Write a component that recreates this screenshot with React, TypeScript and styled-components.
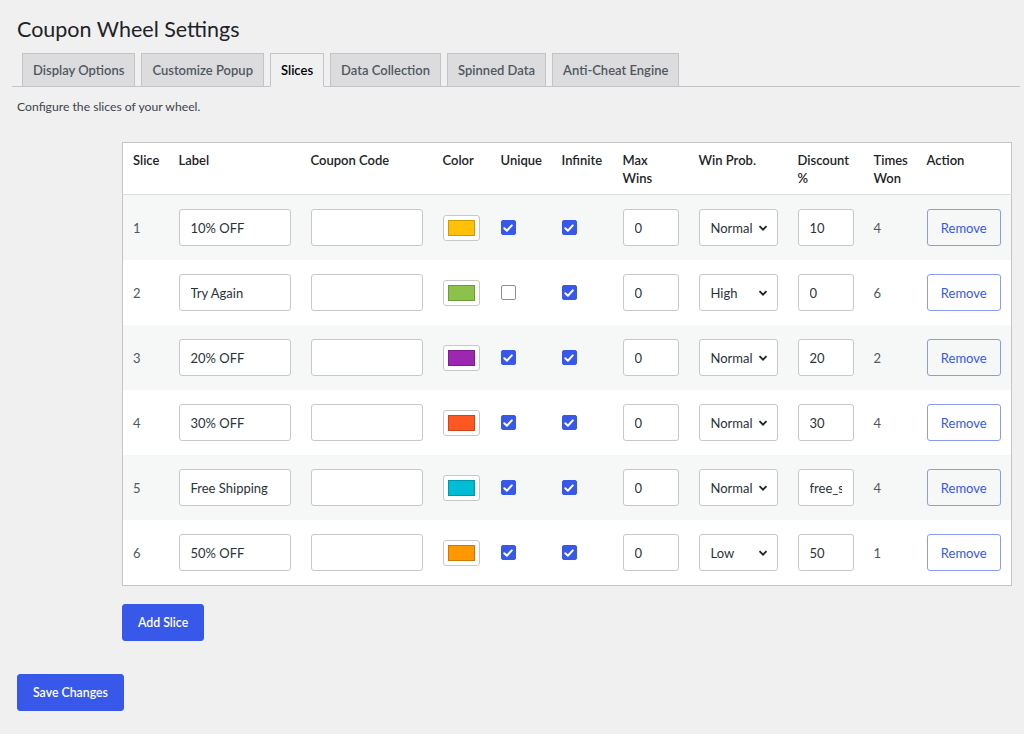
import styled, { createGlobalStyle } from 'styled-components';

type Slice = {
  label: string;
  color: string;
  unique: boolean;
  infinite: boolean;
  prob: string;
  discount: string;
  won: number;
};

const slices: Slice[] = [
  { label: '10% OFF', color: '#ffc107', unique: true, infinite: true, prob: 'Normal', discount: '10', won: 4 },
  { label: 'Try Again', color: '#8bc34a', unique: false, infinite: true, prob: 'High', discount: '0', won: 6 },
  { label: '20% OFF', color: '#9c27b0', unique: true, infinite: true, prob: 'Normal', discount: '20', won: 2 },
  { label: '30% OFF', color: '#ff5722', unique: true, infinite: true, prob: 'Normal', discount: '30', won: 4 },
  { label: 'Free Shipping', color: '#00bcd4', unique: true, infinite: true, prob: 'Normal', discount: 'free_s', won: 4 },
  { label: '50% OFF', color: '#ff9800', unique: true, infinite: true, prob: 'Low', discount: '50', won: 1 },
];

const tabs = ['Display Options', 'Customize Popup', 'Slices', 'Data Collection', 'Spinned Data', 'Anti-Cheat Engine'];

const columns = [
  { title: 'Slice', width: 46 },
  { title: 'Label', width: 132 },
  { title: 'Coupon Code', width: 132 },
  { title: 'Color', width: 58 },
  { title: 'Unique', width: 61 },
  { title: 'Infinite', width: 61 },
  { title: 'Max Wins', width: 76 },
  { title: 'Win Prob.', width: 99 },
  { title: 'Discount %', width: 76 },
  { title: 'Times Won', width: 53 },
  { title: 'Action', width: 95 },
];

function Check({ checked }: { checked: boolean }) {
  return (
    <CheckBox $checked={checked}>
      {checked && (
        <svg width="12" height="12" viewBox="0 0 12 12">
          <path d="M2.3 6.2 L4.9 8.7 L9.8 3.4" fill="none" stroke="#fff" strokeWidth="2" strokeLinecap="round" strokeLinejoin="round" />
        </svg>
      )}
    </CheckBox>
  );
}

function Select({ value }: { value: string }) {
  return (
    <SelectWrap>
      <SelectBox defaultValue={value}>
        <option>Low</option>
        <option>Normal</option>
        <option>High</option>
      </SelectBox>
      <Chevron width="10" height="10" viewBox="0 0 10 10">
        <path d="M1.5 3.2 L5 6.7 L8.5 3.2" fill="none" stroke="#1d2327" strokeWidth="1.8" />
      </Chevron>
    </SelectWrap>
  );
}

export default function App() {
  return (
    <Page>
      <GlobalStyle />
      <Title>Coupon Wheel Settings</Title>
      <TabBar>
        {tabs.map((t) => (
          <Tab key={t} $active={t === 'Slices'}>
            {t}
          </Tab>
        ))}
      </TabBar>
      <Description>Configure the slices of your wheel.</Description>

      <TableArea>
        <Table>
          <colgroup>
            {columns.map((c) => (
              <col key={c.title} style={{ width: c.width }} />
            ))}
          </colgroup>
          <thead>
            <tr>
              {columns.map((c) => (
                <Th key={c.title}>{c.title}</Th>
              ))}
            </tr>
          </thead>
          <tbody>
            {slices.map((s, i) => (
              <Row key={i} $striped={i % 2 === 0}>
                <Td>
                  <Muted>{i + 1}</Muted>
                </Td>
                <Td>
                  <TextInput defaultValue={s.label} />
                </Td>
                <Td>
                  <TextInput defaultValue="" />
                </Td>
                <Td>
                  <Swatch>
                    <SwatchFill $color={s.color} />
                  </Swatch>
                </Td>
                <Td>
                  <Check checked={s.unique} />
                </Td>
                <Td>
                  <Check checked={s.infinite} />
                </Td>
                <Td>
                  <TextInput defaultValue="0" />
                </Td>
                <Td>
                  <Select value={s.prob} />
                </Td>
                <Td>
                  <TextInput defaultValue={s.discount} />
                </Td>
                <Td>
                  <Muted>{s.won}</Muted>
                </Td>
                <Td>
                  <OutlineButton>Remove</OutlineButton>
                </Td>
              </Row>
            ))}
          </tbody>
        </Table>
        <PrimaryButton>Add Slice</PrimaryButton>
      </TableArea>

      <PrimaryButton>Save Changes</PrimaryButton>
    </Page>
  );
}

const GlobalStyle = createGlobalStyle`
  html, body {
    margin: 0;
    background: #f0f0f1;
  }
  body {
    font-family: Lato, "Noto Sans", sans-serif;
    font-size: 13px;
    color: #3c434a;
  }
  * {
    box-sizing: border-box;
  }
`;

const Page = styled.div`
  padding: 12px 4px 22px 17px;
  min-height: 734px;
`;

const Title = styled.h1`
  margin: 0;
  padding: 3px 0 0;
  font-size: 21.5px;
  font-weight: 400;
  line-height: 28px;
  color: #1d2327;
`;

const TabBar = styled.div`
  display: flex;
  align-items: flex-end;
  gap: 6px;
  margin: 10px 0 0 -5px;
  padding-left: 10px;
  border-bottom: 1px solid #c3c4c7;
`;

const Tab = styled.div<{ $active: boolean }>`
  padding: 6px 10px;
  margin-bottom: -1px;
  font-size: 13px;
  font-weight: 600;
  line-height: 20px;
  color: ${(p) => (p.$active ? '#000' : '#50575e')};
  background: ${(p) => (p.$active ? '#f0f0f1' : '#dcdcde')};
  border: 1px solid #c3c4c7;
  border-bottom-color: ${(p) => (p.$active ? '#f0f0f1' : '#c3c4c7')};
`;

const Description = styled.p`
  margin: 11px 0 0;
  font-size: 12.2px;
  line-height: 18px;
  color: #3c434a;
`;

const TableArea = styled.div`
  display: flex;
  flex-direction: column;
  align-items: flex-start;
  gap: 18px;
  margin: 26px 0 33px 105px;
`;

const Table = styled.table`
  width: 889px;
  table-layout: fixed;
  border-collapse: collapse;
  background: #fff;
  border: 1px solid #c3c4c7;
`;

const Th = styled.th`
  padding: 8px 10px 7px;
  text-align: left;
  vertical-align: top;
  font-size: 13px;
  font-weight: 600;
  line-height: 18px;
  height: 51px;
  color: #1d2327;
  border-bottom: 1px solid #dcdcde;
`;

const Row = styled.tr<{ $striped: boolean }>`
  background: ${(p) => (p.$striped ? '#f6f7f7' : '#fff')};
`;

const Td = styled.td`
  padding: 14px 10px;
  height: 65px;
  vertical-align: middle;
`;

const Muted = styled.span`
  font-size: 13px;
  color: #50575e;
`;

const TextInput = styled.input`
  display: block;
  width: 100%;
  height: 37px;
  padding: 0 11px;
  font-family: inherit;
  font-size: 13px;
  color: #2c3338;
  background: #fff;
  border: 1px solid #c8c8cb;
  border-radius: 3px;
`;

const Swatch = styled.div`
  width: 37px;
  height: 26px;
  padding: 4px;
  background: #fff;
  border: 1px solid #c8c8cb;
  border-radius: 3px;
`;

const SwatchFill = styled.div<{ $color: string }>`
  width: 100%;
  height: 100%;
  background: ${(p) => p.$color};
  border: 1px solid rgba(0, 0, 0, 0.2);
`;

const CheckBox = styled.span<{ $checked: boolean }>`
  display: flex;
  align-items: center;
  justify-content: center;
  width: 15px;
  height: 15px;
  border-radius: 2px;
  background: ${(p) => (p.$checked ? '#3858e9' : '#fff')};
  border: 1px solid ${(p) => (p.$checked ? '#3858e9' : '#8c8f94')};
`;

const SelectWrap = styled.div`
  position: relative;
  width: 100%;
`;

const SelectBox = styled.select`
  appearance: none;
  display: block;
  width: 100%;
  height: 37px;
  padding: 0 20px 0 11px;
  font-family: inherit;
  font-size: 13px;
  color: #2c3338;
  background: #fff;
  border: 1px solid #c8c8cb;
  border-radius: 3px;
`;

const Chevron = styled.svg`
  position: absolute;
  right: 10px;
  top: 14px;
  pointer-events: none;
`;

const OutlineButton = styled.button`
  display: block;
  width: 100%;
  height: 37px;
  font-family: inherit;
  font-size: 13px;
  color: #3858e9;
  background: transparent;
  border: 1px solid #8a9bf3;
  border-radius: 3px;
  cursor: pointer;
`;

const PrimaryButton = styled.button`
  height: 37px;
  padding: 0 15px;
  font-family: inherit;
  font-size: 12.3px;
  font-weight: 600;
  color: #fff;
  background: #3858e9;
  border: 1px solid #3858e9;
  border-radius: 3px;
  cursor: pointer;
`;
